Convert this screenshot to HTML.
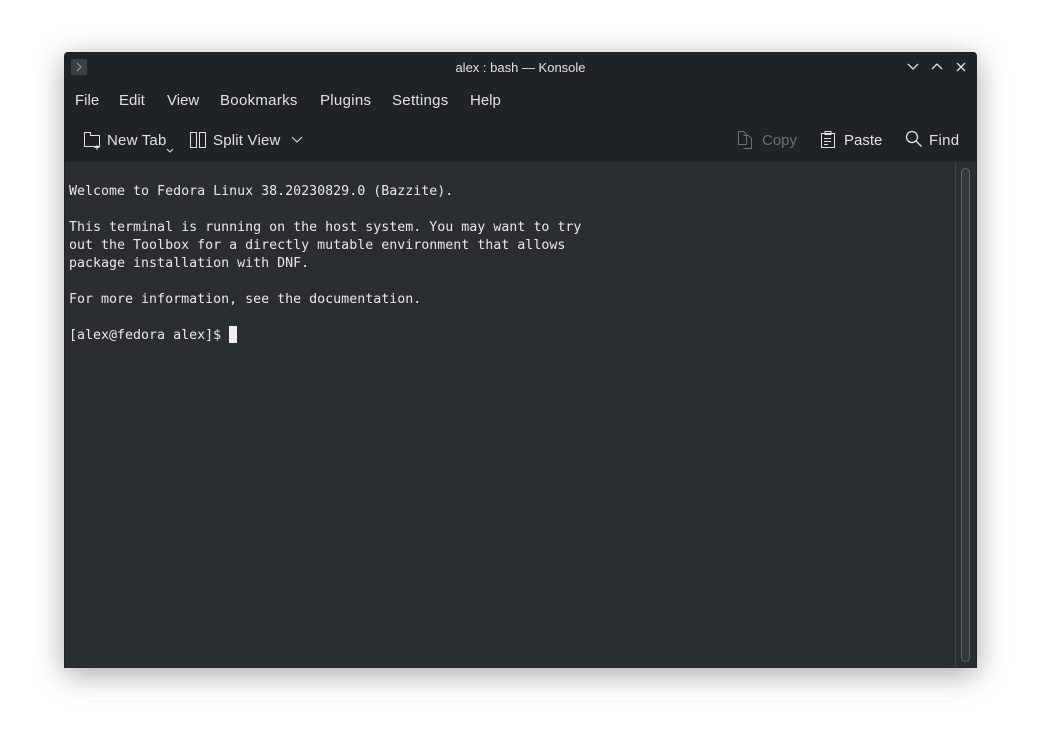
<!DOCTYPE html>
<html><head><meta charset="utf-8"><style>
*{margin:0;padding:0;box-sizing:border-box}
body{width:1041px;height:745px;background:#fff;position:relative;overflow:hidden;font-family:"Liberation Sans",sans-serif}
.win{position:absolute;left:64px;top:52px;width:913px;height:616px;background:#202326;border-radius:4px 4px 0 0;box-shadow:0 6px 30px rgba(0,0,0,.35);overflow:hidden}
.t{position:absolute;color:#dfe1e3;white-space:nowrap}
.term{position:absolute;left:1px;top:110px;width:911px;height:506px;background:#2a2e32}
.mono{position:absolute;left:4px;font-family:"DejaVu Sans Mono","Liberation Mono",monospace;font-size:13.3px;color:#e8e8e8;white-space:pre;line-height:18px}
svg{position:absolute}
</style></head><body>
<div class="win">
<div style="position:absolute;left:7px;top:7px;width:16px;height:16px;background:#3b4044;border-radius:2px"></div>
<svg style="left:7px;top:7px" width="16" height="16"><path d="M6 4l4 4-4 4" stroke="#9a9fa4" fill="none" stroke-width="1"/></svg>
<div class="t" style="left:0;width:913px;text-align:center;top:8px;font-size:13px">alex : bash — Konsole</div>
<svg style="left:842px;top:8px" width="70" height="14"><path d="M2 4l5 5 5-5M26 9l5-5 5 5M51 3l8 8M59 3l-8 8" stroke="#dfe1e3" fill="none" stroke-width="1.3"/></svg>
<div class="t" style="left:11px;top:40px;font-size:15px">File</div>
<div class="t" style="left:55px;top:40px;font-size:15px">Edit</div>
<div class="t" style="left:103px;top:40px;font-size:15px">View</div>
<div class="t" style="left:156px;top:40px;font-size:15px;letter-spacing:0.3px">Bookmarks</div>
<div class="t" style="left:256px;top:40px;font-size:15px;letter-spacing:0.3px">Plugins</div>
<div class="t" style="left:328px;top:40px;font-size:15px;letter-spacing:0.3px">Settings</div>
<div class="t" style="left:406px;top:40px;font-size:15px">Help</div>
<svg style="left:19px;top:79px" width="20" height="20"><path d="M1.5 1.5h6v3h9v11h-15z" stroke="#dfe1e3" fill="none"/><path d="M14 14v5M11.5 16.5h5" stroke="#dfe1e3"/></svg>
<div class="t" style="left:43px;top:80px;font-size:15px;letter-spacing:0.2px">New Tab</div>
<svg style="left:102px;top:96px" width="8" height="6"><path d="M1 1l3 3 3-3" stroke="#dfe1e3" fill="none"/></svg>
<svg style="left:125px;top:79px" width="18" height="18"><path d="M1.5 1.5h6v15h-6zM10.5 1.5h6v15h-6z" stroke="#dfe1e3" fill="none"/></svg>
<div class="t" style="left:149px;top:80px;font-size:15px;letter-spacing:0.2px">Split View</div>
<svg style="left:227px;top:84px" width="12" height="8"><path d="M1 1l5 5 5-5" stroke="#dfe1e3" fill="none"/></svg>
<svg style="left:673px;top:78px" width="18" height="20"><path d="M1.5 1.5h5l3 3v10h-8z M6.5 5.5h5l3 3v10h-8" stroke="#6b7075" fill="none"/></svg>
<div class="t" style="left:698px;top:80px;font-size:15px;color:#6b7075">Copy</div>
<svg style="left:756px;top:78px" width="18" height="20"><path d="M1.5 3.5h13v14h-13z M5 1.5h6v3h-6z M4 8.5h7M4 11.5h7M4 14.5h4" stroke="#dfe1e3" fill="none"/></svg>
<div class="t" style="left:780px;top:80px;font-size:15px">Paste</div>
<svg style="left:841px;top:78px" width="18" height="18"><circle cx="7" cy="7" r="5.5" stroke="#dfe1e3" fill="none" stroke-width="1.3"/><path d="M11 11l5.5 5.5" stroke="#dfe1e3" stroke-width="1.3"/></svg>
<div class="t" style="left:865px;top:80px;font-size:15px;letter-spacing:0.3px">Find</div>
<div class="term">
<div class="mono" style="top:21px">Welcome to Fedora Linux 38.20230829.0 (Bazzite).

This terminal is running on the host system. You may want to try
out the Toolbox for a directly mutable environment that allows
package installation with DNF.

For more information, see the documentation.

[alex@fedora alex]$ </div>
<div style="position:absolute;left:164px;top:164px;width:8px;height:17px;background:#f0f0f0"></div>
<div style="position:absolute;left:890px;top:0;width:1px;height:506px;background:#3d4247"></div>
<div style="position:absolute;left:896px;top:6px;width:9px;height:494px;border:1px solid #62676c;border-radius:5px;background:#34383c"></div>
</div>
</div>
</body></html>
